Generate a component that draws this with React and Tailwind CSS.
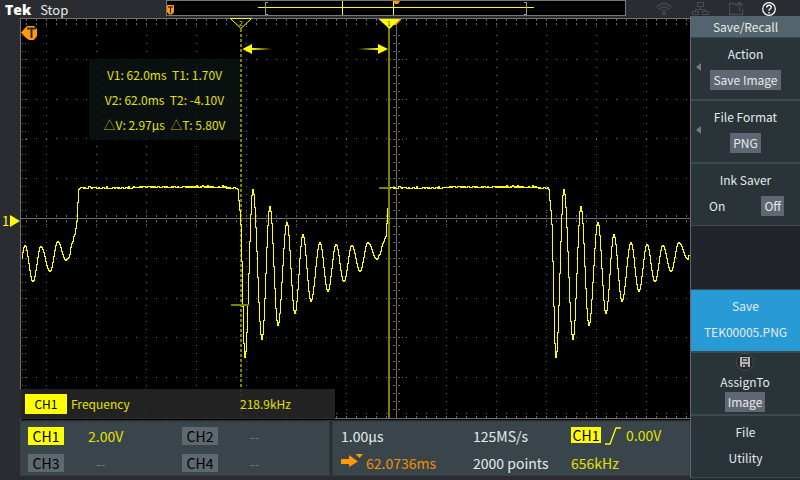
import clsx from 'clsx';

// Turning points of the ringing after the falling edge, [x, y] in plot pixels
const RINGING = [
  [217, 171], [219, 192], [224, 339], [232, 171], [241, 321], [249, 188], [257, 307], [266, 204],
  [274, 295], [282, 216], [290, 283], [299, 224], [307, 273], [315, 226], [323, 263],
  [331, 227], [339, 253], [347, 224], [356, 241],
];
const LEAD_IN = [
  [0, 240], [4, 227], [12, 263], [20, 228], [29, 253], [37, 223], [45, 242], [48, 239],
  [51, 225], [54, 216], [56, 203], [57, 184], [58, 171], [59, 170],
];
const RISE = [[359, 236], [362, 225], [365, 218], [366, 205], [367, 190], [368, 175], [369, 170]];
const PERIOD = 311;

function ease(points) {
  const out = [];
  for (let i = 1; i < points.length; i++) {
    const [x0, y0] = points[i - 1];
    const [x1, y1] = points[i];
    for (let x = x0; x < x1; x++) {
      const t = (1 - Math.cos((Math.PI * (x - x0)) / (x1 - x0))) / 2;
      out.push([x, Math.round(y0 + (y1 - y0) * t)]);
    }
  }
  return out;
}

// Flat top: drifts up a little, with noise of one or two levels
function plateau(from, to) {
  const out = [];
  let seed = 7;
  for (let x = from; x < to; x++) {
    seed = (seed * 1664525 + 1013904223) % 4294967296;
    const r = seed / 4294967296;
    const p = (x - from) / (to - from);
    const base = p < 0.34 ? 170 : p < 0.93 ? 169 : 170;
    out.push([x, base - (r > 0.97 ? 2 : r > 0.5 ? 1 : 0)]);
  }
  return out;
}

const samples = [
  ...ease(LEAD_IN),
  ...plateau(59, 217),
  ...ease([...RINGING, ...RISE]),
  ...plateau(369, 217 + PERIOD),
  ...ease(RINGING.map(([x, y]) => [x + PERIOD, y])),
  [667, 241], [668, 237], [669, 237],
].filter(([x]) => x < 670);

const TRACE = 'M1.5 240.5' + samples.filter(([x]) => x > 1).map(([x, y]) => `H${x + 0.5}V${y + 0.5}`).join('');
const NOISE = samples
  .filter(([x, y]) => y === 168 && x % 5 < 3)
  .map(([x]) => `M${x} 169.500h1`)
  .join('');

const COLS = Array.from({ length: 13 }, (_, i) => 26 + i * 50);
const ROWS = [41, 81, 120, 160, 240, 280, 319, 359];

function dots() {
  let d = '';
  const dot = (x, y) => { d += `M${x} ${y + 0.5}h1`; };
  for (let x = 6; x < 670; x += 10) {
    ROWS.forEach(y => dot(x, y));
    [1, 2, 5, 6, 395, 398, 399].forEach(y => dot(x, y));
    [197, 198, 202, 203].forEach(y => dot(x, y));
    if ((x - 26) % 50 === 0) [8, 391, 192, 194, 206, 208].forEach(y => dot(x, y));
  }
  for (let i = -23; i < 25; i++) {
    const y = Math.round(200 + i * 7.95);
    COLS.forEach(x => dot(x, y));
    [2, 5, 373, 374, 378, 379].forEach(x => dot(x, y));
    if (i % 5 === 0) [6, 370, 382].forEach(x => dot(x, y));
  }
  return d;
}
const DOTS = dots();

function Plot() {
  return (
    <svg viewBox="0 0 670 402" className="block h-auto w-full bg-black" aria-label="Channel 1 waveform">
      <defs>
        <linearGradient id="fadeRight"><stop offset="0" stopColor="#ff0" /><stop offset="1" stopColor="#ff0" stopOpacity="0" /></linearGradient>
        <linearGradient id="fadeLeft"><stop offset="0" stopColor="#ff0" stopOpacity="0" /><stop offset="1" stopColor="#ff0" /></linearGradient>
      </defs>
      <g shapeRendering="crispEdges" fill="none">
        <path d={DOTS} stroke="#6b6b6b" />
        <path d="M0 200.500H670M376.500 0V401" stroke="#6a6a6c" />
        <path d="M0.500 402V0.500H670M0 400.500H670" stroke="#707074" />
        <path d="M221 11V400" stroke="#808000" strokeWidth="2" strokeDasharray="3 2" />
        <path d={TRACE + NOISE} stroke="#ffff00" />
        <path d="M369 10V400M211 287H229M359 170H369" stroke="#808000" strokeWidth="2" />
      </g>
      {/* trigger level */}
      <path d="M1 14.500L7 8H14L17 11V18L14 22H9L5 19Z" fill="#ff9a00" />
      <path d="M7 10.500H16M11.500 10.500V20" stroke="#2a2c33" strokeWidth="2" />
      {/* cursor handles */}
      <path d="M374 1H382L376 7L370 7Z" fill="#ff9a00" />
      <path d="M358.500 1H380L369.500 11Z" fill="#ffff00" />
      <path d="M210.500 0.500H231.500L221 10.500Z" fill="#000" stroke="#ffff00" />
      <text x="369" y="8" textAnchor="middle" fill="#555500" fontSize="7" fontFamily="DejaVu Sans">1</text>
      <text x="221" y="8" textAnchor="middle" fill="#d8d800" fontSize="7" fontFamily="DejaVu Sans">2</text>
      {/* span arrows */}
      <path d="M222.500 31L232 26V36ZM368 31L358 26V36Z" fill="#ffff00" />
      <rect x="232" y="30" width="20" height="2" fill="url(#fadeRight)" />
      <rect x="338" y="30" width="20" height="2" fill="url(#fadeLeft)" />
    </svg>
  );
}

function RecordBar() {
  return (
    <svg viewBox="0 0 460 16" className="block h-auto w-full bg-black" aria-label="Record view">
      <g shapeRendering="crispEdges" fill="none">
        <rect x="0.5" y="0.5" width="459" height="15" stroke="#77777b" />
        <path d="M92 7.500H368M176.500 1V15M227.500 1V15" stroke="#ffff00" />
        <path d="M102 2.500H99.500V14.500H102M358 2.500H360.500V14.500H358" stroke="#9a9aa0" />
      </g>
      <path d="M227 1H234L232 4H229Z" fill="#ff9a00" />
      <path d="M1 5H8V12L6 14.500H3L1 12Z" fill="#ff9a00" />
      <path d="M2 7H7M4.500 7V13" stroke="#111" />
    </svg>
  );
}

function StatusIcons() {
  return (
    <div className="flex w-[174px] shrink-0 items-center pl-[30px] pt-0.5 text-[#454f53]">
      <svg className="h-4 w-4" viewBox="0 0 16 16" fill="none" stroke="currentColor" strokeWidth="1.200" aria-label="Wi-Fi">
        <path d="M0.500 6.500C4.500 1 11.500 1 15.500 6.500M3 8.500C6 4.700 10 4.700 13 8.500M5.500 10.500C7 8.500 9 8.500 10.500 10.500" />
        <circle cx="8" cy="12.500" r="1.100" fill="currentColor" />
      </svg>
      <svg className="ml-5 h-4 w-[17px]" viewBox="0 0 17 16" fill="none" stroke="currentColor" aria-label="Network" shapeRendering="crispEdges">
        <path d="M5.500 1.500H11.500V5.500H5.500ZM0.500 10.500H6.500V13.500H0.500ZM10.500 10.500H16.500V13.500H10.500ZM8.500 5.500V8M3.500 10V8.500H13.500V10" />
      </svg>
      <svg className="ml-5 h-4 w-4" viewBox="0 0 16 16" fill="none" stroke="currentColor" aria-label="Export">
        <path d="M8 3.500H6L5 2.500H0.500V13.500H13.500V8M10.500 10V2M7.500 4.500L10.500 1.500L13.500 4.500" strokeWidth="1.300" />
      </svg>
      <svg className="ml-[17px] h-[14px] w-[14px] text-white" viewBox="0 0 14 14" fill="none" stroke="currentColor" aria-label="Help">
        <circle cx="7" cy="7" r="6.300" strokeWidth="1.200" />
        <path d="M4.700 5.500C4.700 2.500 9.500 2.500 9.300 5.300C9.200 6.800 7 6.800 7 8.700M7 10V11.500" strokeWidth="1.400" />
      </svg>
    </div>
  );
}

function Readout() {
  return (
    <div className="absolute left-[69px] top-[41px] w-[151px] whitespace-pre bg-[#0c1414]/80 py-[3px] text-center text-[12px] leading-[25px] text-[#e2e200]">
      <p>V1: 62.0ms  T1: 1.70V</p>
      <p>V2: 62.0ms  T2: -4.10V</p>
      <p><span className="text-[#b4b400]">△</span>V: 2.97µs  <span className="text-[#b4b400]">△</span>T: 5.80V</p>
    </div>
  );
}

function Measurement() {
  return (
    <div className="absolute bottom-px left-0 flex h-[30px] w-[315px] items-center bg-[#262626]/90 pl-[5px] text-[12px] leading-5 text-[#e2e200]">
      <span className="w-[42px] bg-[#ffff00] text-center text-black">CH1</span>
      <span className="ml-1 w-[169px]">Frequency</span>
      <span>218.9kHz</span>
    </div>
  );
}

function Channel({ name, value }) {
  return (
    <div className="flex items-center pl-[7px]">
      <button className={clsx('h-[18px] w-9 text-black', value ? 'bg-[#ffff00]' : 'bg-[#5f686f]')}>{name}</button>
      {value
        ? <span className="ml-6 text-[#e2e200]">{value}</span>
        : <span className="ml-8 text-[#6d7a7c]">--</span>}
    </div>
  );
}

function BottomBar() {
  return (
    <div className="ml-5 mt-px flex gap-0.5 text-[14px] leading-[18px]">
      <div className="grid w-[310px] grid-cols-2 gap-y-[9px] border border-[#343b3f] bg-[#3a454b] pb-[3px] pt-[5px]">
        <Channel name="CH1" value="2.00V" />
        <Channel name="CH2" />
        <Channel name="CH3" />
        <Channel name="CH4" />
      </div>
      <div className="grid flex-1 grid-cols-[132px_98px_1fr] gap-y-[9px] border border-[#343b3f] bg-[#3a454b] pb-[3px] pl-2 pt-[5px] text-[#e4ece8]">
        <span>1.00µs</span>
        <span>125MS/s</span>
        <div className="flex items-start text-[#e2e200]">
          <span className="h-4 w-[30px] bg-[#ffff00] text-center leading-4 text-black">CH1</span>
          <svg className="mx-1 h-[18px] w-[17px]" viewBox="0 0 17 18" fill="none" stroke="#ffff00" strokeWidth="1.300" aria-label="Rising edge">
            <path d="M0 17H5L11 1H16" />
          </svg>
          <span className="leading-4">0.00V</span>
        </div>
        <div className="flex items-center text-[#f09000]">
          <svg className="mr-[3px] h-[18px] w-[22px]" viewBox="0 0 22 18" fill="#ff9a00" aria-hidden="true">
            <path d="M0 5H8V1L17 7.500L8 13V10H0ZM14.500 0H22L18.500 4Z" />
          </svg>
          62.0736ms
        </div>
        <span>2000 points</span>
        <span className="text-[#e2e200]">656kHz</span>
      </div>
    </div>
  );
}

function Chip({ children }) {
  return <span className="bg-[#606672] px-[3px]">{children}</span>;
}

function MenuItem({ title, arrow, active, children }) {
  return (
    <button className={clsx(
      'flex h-[63px] w-full items-center border-y border-[#3b4b4d] pb-[3px]',
      active ? 'bg-[#289bd7]' : 'bg-[#293338]',
    )}>
      <svg className="ml-1 h-2 w-1.5" viewBox="0 0 6 8" fill="#757b7f" aria-hidden="true">{arrow && <path d="M6 0V8L1 4Z" />}</svg>
      <span className="flex flex-1 flex-col items-center gap-1.5 pr-[10px]">
        <span>{title}</span>
        {children}
      </span>
    </button>
  );
}

function SideMenu() {
  return (
    <nav className="w-[110px] shrink-0 border-l border-[#5b6b75] bg-[#21252b] text-[12px] leading-5 text-[#e4ece8]">
      <h1 className="h-[21px] bg-[#54646e] text-center leading-[22px]">Save/Recall</h1>
      <MenuItem title="Action" arrow><Chip>Save Image</Chip></MenuItem>
      <MenuItem title="File Format" arrow><Chip>PNG</Chip></MenuItem>
      <div className="flex h-[63px] flex-col items-center justify-center gap-1.5 border-y border-[#3b4b4d] bg-[#293338] pb-[3px]">
        <span>Ink Saver</span>
        <div className="flex w-full justify-between pl-[18px] pr-4">
          <button aria-pressed="false">On</button>
          <button aria-pressed="true" className="bg-[#606672] px-[3px]">Off</button>
        </div>
      </div>
      <div className="h-[63px]" />
      <MenuItem title="Save" active><span>TEK00005.PNG</span></MenuItem>
      <button className="flex h-[63px] w-full flex-col items-center border-y border-[#3b4b4d] bg-[#293338] pr-px">
        <svg className="h-[18px] w-[18px] shrink-0" viewBox="0 0 18 18" aria-hidden="true">
          <circle cx="9" cy="9" r="8.500" fill="#25282a" stroke="#4c4a46" />
          <path d="M4 4H14V14H5L4 13Z" fill="#b4b4b8" />
          <path d="M6 5H12V9H6ZM6 11H12V14H6Z" fill="#3a3a3e" />
          <path d="M7 6H11V8H7ZM7 12H9V14H7Z" fill="#a9a9ae" />
        </svg>
        <span className="mt-px">AssignTo</span>
        <Chip>Image</Chip>
      </button>
      <MenuItem title="File"><span>Utility</span></MenuItem>
    </nav>
  );
}

export default function App() {
  return (
    <div className="flex min-h-screen flex-col bg-[#2a2c32] font-['Noto_Sans_CJK_SC','Noto_Sans',sans-serif]">
      <header className="flex h-4">
        <div className="flex h-5 w-[166px] shrink-0 items-center pl-[5px] leading-5">
          <span className="font-['Open_Sans','Noto_Sans',sans-serif] text-[14px] font-extrabold text-white">Tek</span>
          <span className="ml-[9px] text-[13px] text-[#e4ece8]">Stop</span>
        </div>
        <div className="flex-1"><RecordBar /></div>
        <StatusIcons />
      </header>
      <div className="flex">
        <main className="min-w-0 flex-1 pt-0.5">
          <div className="relative ml-5">
            <Plot />
            <div className="absolute -left-[18px] top-[193px] flex items-center text-[13px] leading-5 text-[#ffff00]">
              1
              <svg className="ml-px h-3 w-[10px]" viewBox="0 0 10 12" fill="#ffff00" aria-hidden="true"><path d="M0 0L10 6L0 12Z" /></svg>
            </div>
            <Readout />
            <Measurement />
          </div>
          <BottomBar />
        </main>
        <SideMenu />
      </div>
    </div>
  );
}
